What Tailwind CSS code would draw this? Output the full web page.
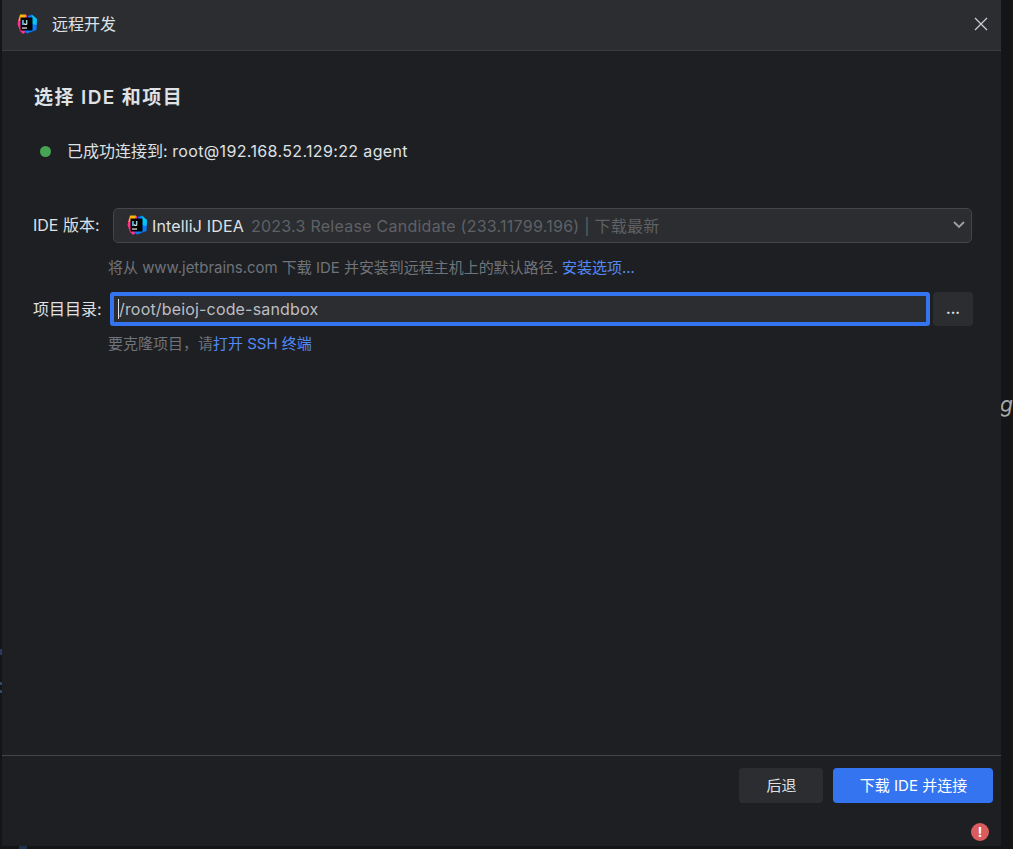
<!DOCTYPE html>
<html lang="zh-CN">
<head>
    <meta charset="UTF-8">
    <title>远程开发</title>
    <script src="https://cdn.jsdelivr.net/npm/@tailwindcss/browser@4"></script>
</head>
<body class="bg-[#141517] h-[849px] w-[1013px] overflow-hidden font-['Inter','Noto_Sans_CJK_SC',sans-serif] text-[16px] text-[#dfe1e5]">
    <div class="relative h-[849px]">
        <!-- bits of the window behind the dialog -->
        <span class="absolute left-[1000px] top-[392px] text-[21px] italic text-[#a8a8a8] leading-[26px]">g</span>
        <span class="absolute left-0 top-[649px] w-[2px] h-[6px] bg-[#2a3a60]"></span>
        <span class="absolute left-0 top-[682px] w-[2px] h-[3px] bg-[#34485e]"></span>
        <span class="absolute left-0 top-[690px] w-[2px] h-[3px] bg-[#34485e]"></span>
        <span class="absolute left-[19px] top-[846px] w-[8px] h-[3px] bg-[#1c3350]"></span>

        <div class="relative ml-[2px] w-[999px] h-[846px] bg-[#1e1f22] flex flex-col">
            <div class="h-[51px] shrink-0 bg-[#2b2d30] border-b border-[#393b40] flex items-center pl-[15px] pr-[12px] pb-[3px]">
                <svg width="20" height="20" viewBox="0 0 20 20" class="shrink-0">
                    <path d="M2 3 L10 1 L10 17 L6 20 L3 17 L0.5 10 Z" fill="#ff318c"/>
                    <path d="M3 0.5 L9 0.5 L8 5 L1.5 7 Z" fill="#fdb60d"/>
                    <path d="M11 2 L15 0.5 L20 5 L19.5 16 L10 19.5 L7 17 L12 12 Z" fill="#087cfa"/>
                    <path d="M15 1 L20 5 L19.5 11 L15 10 Z" fill="#07c3f2"/>
                    <rect x="3.5" y="3.5" width="12" height="13" fill="#000"/>
                    <text x="5" y="10.5" font-size="6.5" font-weight="700" fill="#fff" font-family="Inter">IJ</text>
                    <rect x="5" y="13.5" width="5" height="1.1" fill="#fff"/>
                </svg>
                <span class="ml-[15px] text-[#dfe1e5]">远程开发</span>
                <svg width="14" height="14" viewBox="0 0 14 14" class="ml-auto mr-[1px]">
                    <path d="M1 1 L13 13 M13 1 L1 13" stroke="#ced0d6" stroke-width="1.2" fill="none"/>
                </svg>
            </div>

            <div class="flex-1 pl-[32px] pr-[29px] pt-[34px]">
                <h1 class="text-[19px] leading-[26px] font-semibold tracking-[1.4px] text-[#dfe1e5]">选择 IDE 和项目</h1>

                <div class="mt-[28px] flex items-center h-[24px] pl-[6px]">
                    <span class="w-[11px] h-[11px] rounded-full bg-[#46a454]"></span>
                    <span class="ml-[16px]">已成功连接到: <span class="tracking-[0.36px]">root@192.168.52.129:22 agent</span></span>
                </div>

                <div class="mt-[44px] flex items-center h-[36px]">
                    <label class="w-[80px] -ml-[1px] shrink-0">IDE 版本:</label>
                    <div class="flex-1 h-[35px] rounded-[5px] border border-[#43454a] bg-[#2b2d30] flex items-center pl-[13px] pr-[6px]">
                        <svg width="20" height="20" viewBox="0 0 20 20" class="shrink-0">
                            <path d="M2 3 L10 1 L10 17 L6 20 L3 17 L0.5 10 Z" fill="#ff318c"/>
                            <path d="M3 0.5 L9 0.5 L8 5 L1.5 7 Z" fill="#fdb60d"/>
                            <path d="M11 2 L15 0.5 L20 5 L19.5 16 L10 19.5 L7 17 L12 12 Z" fill="#087cfa"/>
                            <path d="M15 1 L20 5 L19.5 11 L15 10 Z" fill="#07c3f2"/>
                            <rect x="3.5" y="3.5" width="12" height="13" fill="#000"/>
                            <text x="5" y="10.5" font-size="6.5" font-weight="700" fill="#fff" font-family="Inter">IJ</text>
                            <rect x="5" y="13.5" width="5" height="1.1" fill="#fff"/>
                        </svg>
                        <span class="ml-[5px] pt-[1px] tracking-[0.15px] text-[#dfe1e5]">IntelliJ IDEA</span>
                        <span class="ml-[7px] pt-[1px] tracking-[0.26px] text-[#5f6166]">2023.3 Release Candidate (233.11799.196) | 下载最新</span>
                        <svg width="12" height="8" viewBox="0 0 12 8" class="ml-auto">
                            <path d="M1 1 L6 6 L11 1" stroke="#9da0a8" stroke-width="1.8" fill="none"/>
                        </svg>
                    </div>
                </div>

                <p class="mt-[13px] ml-[74px] text-[15px] tracking-[-0.03px] leading-[24px] text-[#6f737a]">将从 www.jetbrains.com 下载 IDE 并安装到远程主机上的默认路径. <span class="text-[#548af7]">安装选项...</span></p>

                <div class="mt-[12px] flex items-center h-[34px]">
                    <label class="w-[77px] -ml-[1px] shrink-0">项目目录:</label>
                    <div class="w-[820px] h-[34px] shrink-0 rounded-[3px] border-[4px] border-[#3574f0] bg-[#2b2d30] flex items-center pl-[4px]">
                        <span class="w-px h-[20px] bg-[#dfe1e5]"></span>
                        <span class="tracking-[0.17px] text-[#bcbec4]">/root/beioj-code-sandbox</span>
                    </div>
                    <button class="ml-[3px] w-[40px] h-[34px] -mt-[1px] shrink-0 rounded-[4px] bg-[#2b2d30] text-[#dfe1e5] text-[14px] font-bold">...</button>
                </div>

                <p class="mt-[6px] ml-[74px] text-[15px] leading-[24px] text-[#6f737a]">要克隆项目，请<span class="text-[#548af7]">打开 SSH 终端</span></p>
            </div>

            <div class="h-[91px] shrink-0 border-t border-[#43454a] flex justify-end gap-[10px] pt-[12px] pr-[8px]">
                <button class="w-[84px] h-[35px] pt-[2px] pl-[1px] rounded-[4px] bg-[#2b2d30] text-[#dfe1e5] text-[15px]">后退</button>
                <button class="w-[160px] h-[35px] pt-[2px] pl-[1px] rounded-[4px] bg-[#3574f0] text-white text-[15px]">下载 IDE 并连接</button>
            </div>

            <!-- notification badge over the corner of the dialog -->
            <span class="absolute left-[969px] top-[823px] w-[18px] h-[18px] rounded-full bg-[#db5c5c] text-white text-[13px] font-bold leading-[18px] text-center">!</span>
        </div>
    </div>
</body>
</html>
